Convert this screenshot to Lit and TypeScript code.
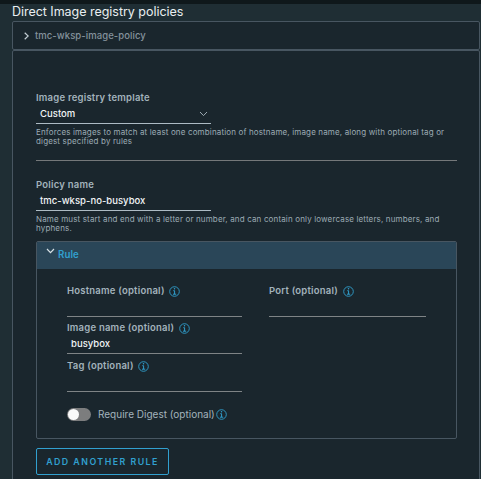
import { LitElement, html, css, svg } from "lit";
import { customElement, property } from "lit/decorators.js";

@customElement("info-icon")
class InfoIcon extends LitElement {
  static styles = css`
    :host { display: block; width: 11px; height: 11px; flex: none; }
    svg { display: block; }
  `;
  render() {
    return html`<svg width="11" height="11" viewBox="0 0 11 11" fill="none" stroke="#31a0cf">
      ${svg`<circle cx="5.5" cy="5.5" r="4.8" stroke-width="0.9"/>
      <path d="M4.3 4.7H5.6V8.1M4 8.2H7.2" stroke-width="1"/>
      <circle cx="5.5" cy="2.8" r="0.75" fill="#31a0cf" stroke="none"/>`}
    </svg>`;
  }
}

@customElement("form-field")
class FormField extends LitElement {
  @property() label = "";
  @property() value = "";
  @property() help = "";
  @property({ type: Boolean }) info = false;
  @property({ type: Boolean }) select = false;
  @property({ type: Boolean }) bright = false;

  static styles = css`
    :host { display: block; }
    .label { display: flex; align-items: center; height: 14px; line-height: 14px; gap: 4.5px;
      font-weight: 600; font-size: 9.5px; letter-spacing: 0.22px; color: #a3b3bc; white-space: nowrap; }
    .label span { padding-top: 2px; }
    info-icon { margin-top: 2px; }
    .control { box-sizing: border-box; display: flex; align-items: center; justify-content: space-between;
      width: var(--control-width, 175px); height: 20px; padding: 0 3px 0 4px; line-height: 19px;
      border-bottom: 1px solid #7f8486; color: #f1f4f5; font-size: 9.5px; font-weight: 500; letter-spacing: 0.03px; white-space: nowrap; }
    .bright { border-bottom-color: #adbbc4; }
    .help { margin-top: 4px; font-size: 8px; line-height: 9.3px; letter-spacing: 0.147px; color: #9cabb4; white-space: pre; }
  `;
  render() {
    return html`
      <div class="label"><span>${this.label}</span>${this.info ? html`<info-icon></info-icon>` : ""}</div>
      <div class="control ${this.bright ? "bright" : ""}">
        <span>${this.value}</span>
        ${this.select
          ? html`<svg width="9" height="6" viewBox="0 0 9 6" fill="none" stroke="#9eacb4"><path d="M1 1L4.5 4.6L8 1"/></svg>`
          : ""}
      </div>
      ${this.help ? html`<div class="help">${this.help}</div>` : ""}
    `;
  }
}

@customElement("app-root")
class AppRoot extends LitElement {
  static styles = css`
    :host { display: block; box-sizing: border-box; width: 481px; height: 479px; overflow: hidden;
      background: #1f2e34; border-top: 4px solid #0f181b; padding: 0 1px 0 12px;
      font-family: Inter, "Noto Sans", sans-serif; color: #a3b3bc; }
    .title { height: 17px; line-height: 16px; font-size: 12.5px; color: #e9eef0; letter-spacing: -0.03px; white-space: nowrap; }
    .panel { box-sizing: border-box; background: #1a262d; border: 1px solid #485661; border-radius: 2px; }
    .collapsed { display: flex; align-items: center; height: 29px; padding-left: 11px; gap: 6px;
      font-size: 9.5px; font-weight: 500; letter-spacing: 0.07px; color: #84929c; }
    .open { height: 440px; padding: 39px 22px 0 23px; }
    .divider { height: 1px; margin: 13px 0 16px; background: #75787a; }
    .rule { box-sizing: border-box; height: 198px; margin-top: 8px; border: 1px solid #485661; border-radius: 2px; overflow: hidden; }
    .rule-head { box-sizing: border-box; display: flex; height: 27px; padding-left: 9px; gap: 3px;
      background: #2a4658; color: #31a0cf; font-size: 9.7px; font-weight: 600; letter-spacing: 0.1px; line-height: 26px; }
    .rule-head svg { margin-top: 6px; }
    .rule-body { padding: 14px 30px 0; display: grid; grid-template-columns: 175px 157px; column-gap: 27px; }
    .narrow { --control-width: 157px; }
    .image { margin-top: 3px; grid-column: 1; }
    .tag { margin-top: 4px; grid-column: 1; }
    .digest { grid-column: 1 / -1; display: flex; align-items: center; margin-top: 16px; height: 13px;
      font-size: 10px; line-height: 13px; white-space: nowrap; }
    .toggle { box-sizing: border-box; width: 24px; height: 13px; border-radius: 7px; background: #7c7d7e; padding: 1px; margin-right: 7px; }
    .knob { width: 11px; height: 11px; border-radius: 50%; background: #fafafa; }
    .digest info-icon { margin: 0 0 0 1.5px; }
    .add { box-sizing: border-box; display: block; width: 133px; height: 27px; margin-top: 9px; padding: 0;
      border: 1px solid #31a0cf; border-radius: 2px; background: transparent; color: #31a0cf;
      font: 600 8.8px/26px Inter, sans-serif; letter-spacing: 1.48px; white-space: nowrap; }
  `;
  render() {
    return html`
      <div class="title"><span>Direct Image registry policies</span></div>
      <div class="panel collapsed">
        <svg width="5" height="8" viewBox="0 0 5 8" fill="none" stroke="#c3ced4" stroke-width="1.2"><path d="M0.7 0.7L4.2 4L0.7 7.3"/></svg>
        <span>tmc-wksp-image-policy</span>
      </div>
      <div class="panel open">
        <form-field select bright label="Image registry template" value="Custom"
          .help=${"Enforces images to match at least one combination of hostname, image name, along with optional tag or\ndigest specified by rules"}></form-field>
        <div class="divider"></div>
        <form-field bright label="Policy name" value="tmc-wksp-no-busybox"
          .help=${"Name must start and end with a letter or number, and can contain only lowercase letters, numbers, and\nhyphens."}></form-field>
        <div class="rule">
          <div class="rule-head">
            <svg width="9" height="6" viewBox="0 0 9 6" fill="none" stroke="#d5dfe4" stroke-width="1.2"><path d="M1 1L4.5 4.6L8 1"/></svg>
            <span>Rule</span>
          </div>
          <div class="rule-body">
            <form-field info label="Hostname (optional)"></form-field>
            <form-field class="narrow" info label="Port (optional)"></form-field>
            <form-field class="image" info label="Image name (optional)" value="busybox"></form-field>
            <form-field class="tag" info label="Tag (optional)"></form-field>
            <div class="digest">
              <div class="toggle"><div class="knob"></div></div>
              <span>Require Digest (optional)</span><info-icon></info-icon>
            </div>
          </div>
        </div>
        <button class="add">ADD ANOTHER RULE</button>
      </div>
    `;
  }
}
